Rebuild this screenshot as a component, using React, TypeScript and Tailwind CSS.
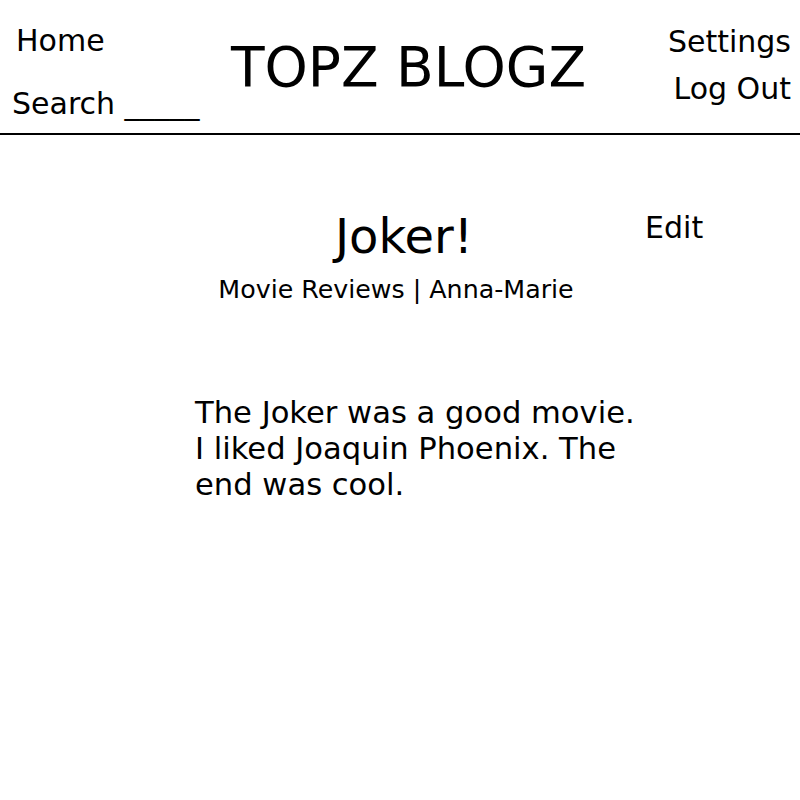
import React from 'react';

const font = { fontFamily: '"DejaVu Sans", Verdana, sans-serif' };

const App: React.FC = () => {
  return (
    <div className="min-h-[800px] w-[800px] bg-white text-black" style={font}>
      {/* Header */}
      <header className="grid h-[135px] grid-cols-[1fr_auto_1fr] border-b-2 border-black">
        <div className="flex flex-col items-start pl-[12px] pt-[23px] text-[30px] leading-[36px]">
          <a className="ml-[4px]">Home</a>
          <div className="mt-[27px] whitespace-pre">Search _____</div>
        </div>
        <div className="pl-[17px] pt-[40px]">
          <h1 className="text-[55px] leading-[55px]">TOPZ BLOGZ</h1>
        </div>
        <div className="flex flex-col items-end pr-[9px] pt-[24px] text-[30px] leading-[36px]">
          <a>Settings</a>
          <a className="mt-[11px]">Log Out</a>
        </div>
      </header>

      {/* Post */}
      <main className="flex flex-col items-center pt-[75px]">
        <div className="grid w-full grid-cols-[1fr_auto_1fr] items-start">
          <div />
          <h2 className="ml-[8px] mt-[2px] text-[48px] leading-[48px]">Joker!</h2>
          <div className="pl-[172px] text-[30px] leading-[36px]">
            <a>Edit</a>
          </div>
        </div>
        <p className="mr-[8px] mt-[15px] text-[25.3px] leading-[30px]">
          Movie Reviews | Anna-Marie
        </p>
        <div className="mt-[90px] w-full pl-[195px]">
          <p className="w-[448px] text-[30.6px] leading-[36px]">
            The Joker was a good movie. I liked Joaquin Phoenix. The end was cool.
          </p>
        </div>
      </main>
    </div>
  );
};

export default App;
